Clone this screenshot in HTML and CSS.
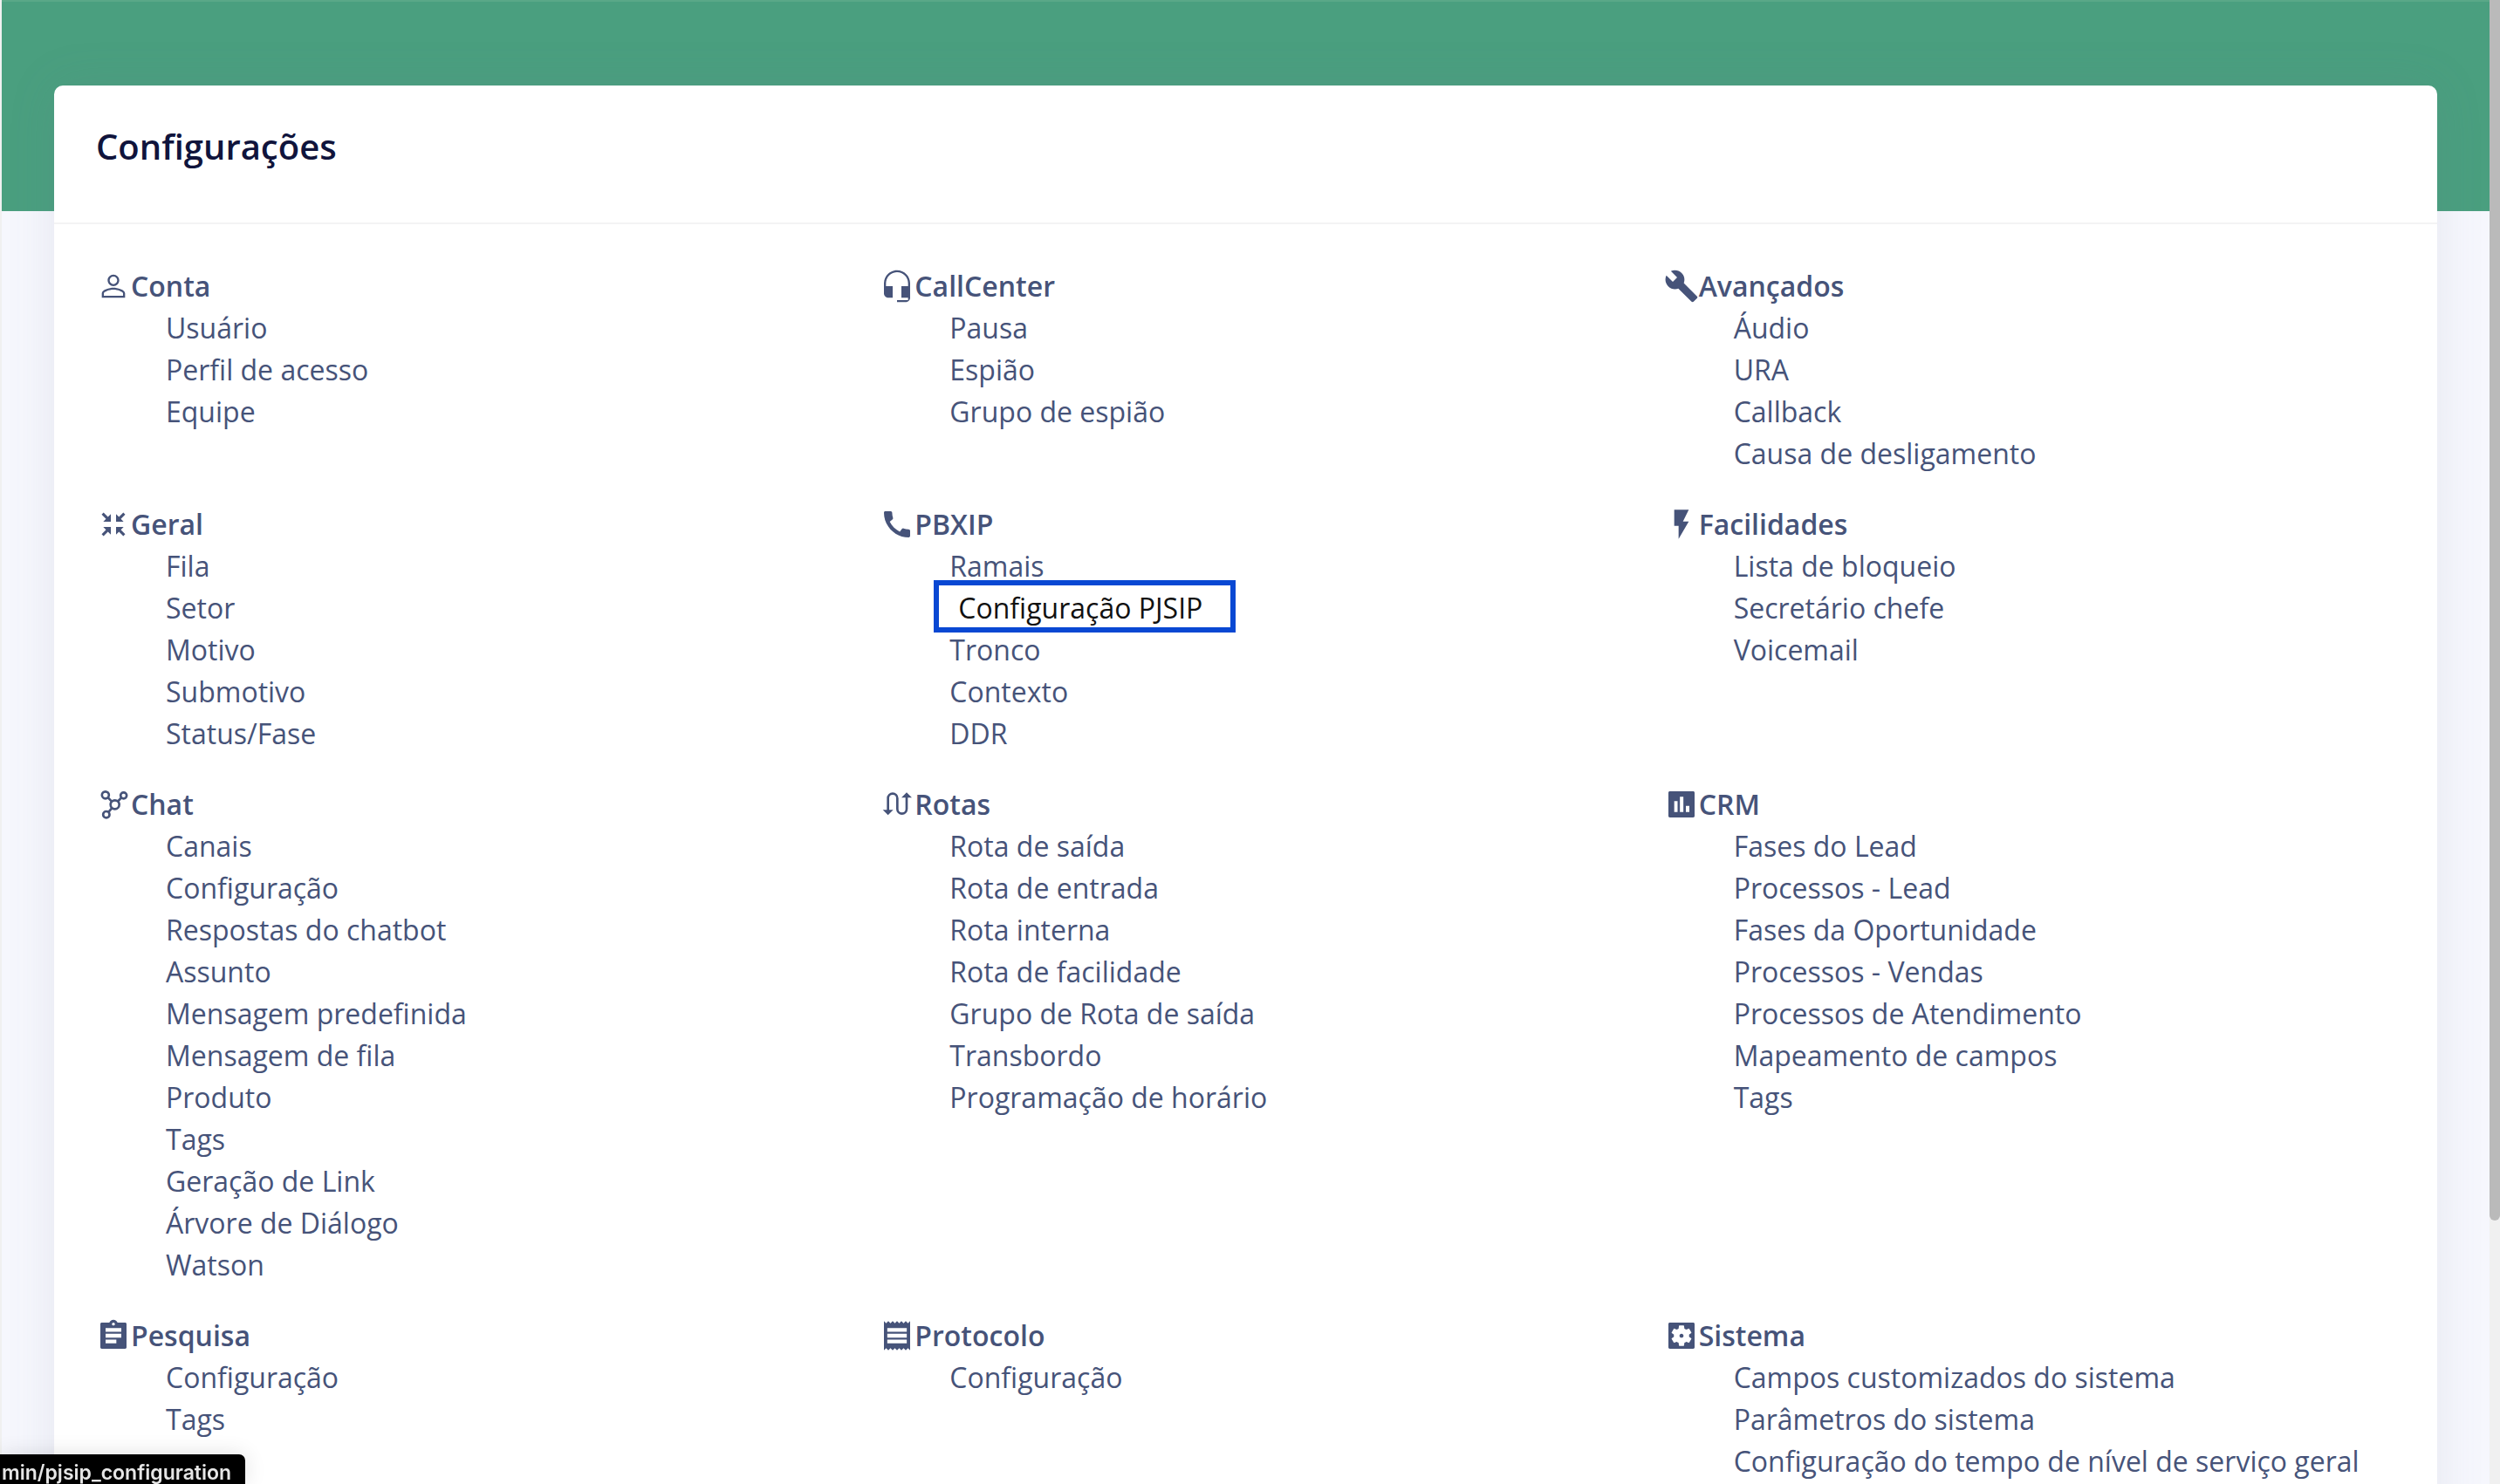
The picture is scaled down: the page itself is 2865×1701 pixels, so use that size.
FILE: index.html
```html
<!DOCTYPE html>
<html lang="pt-BR">
<head>
<meta charset="utf-8">
<meta name="viewport" content="width=device-width, initial-scale=1">
<title>Configurações</title>
<link rel="stylesheet" href="styles.css">
</head>
<body>
<div class="viewport">
  <main class="page">
    <section class="card">
      <header class="card-header"><h1 class="card-title">Configurações</h1></header>
      <div class="groups">
        <section class="group">
          <h2 class="group-title"><svg class="icon" viewBox="0 0 24 24" aria-hidden="true"><path d="M12 5.400c1.440 0 2.600 1.160 2.600 2.600s-1.160 2.600-2.600 2.600S9.400 9.440 9.400 8s1.160-2.600 2.600-2.600m0 9c2.970 0 6.600 1.460 6.600 2.600v1.600H5.400V17c0-1.140 3.630-2.600 6.600-2.600M12 4C9.790 4 8 5.790 8 8s1.790 4 4 4 4-1.790 4-4-1.790-4-4-4zm0 9c-2.670 0-8 1.340-8 4v3h16v-3c0-2.660-5.330-4-8-4z"/></svg>Conta</h2>
          <ul class="links">
            <li><a href="#">Usuário</a></li>
            <li><a href="#">Perfil de acesso</a></li>
            <li><a href="#">Equipe</a></li>
          </ul>
        </section>
        <section class="group">
          <h2 class="group-title"><svg class="icon" viewBox="0 0 24 24" aria-hidden="true"><path d="M12 1c-4.970 0-9 4.030-9 9v7c0 1.660 1.340 3 3 3h3v-8H4.400v-2c0-4.200 3.400-7.600 7.600-7.600s7.600 3.400 7.600 7.600v2H15v8h4.600v1.600H12V23h6c1.660 0 3-1.340 3-3V10c0-4.970-4.030-9-9-9z"/></svg>CallCenter</h2>
          <ul class="links">
            <li><a href="#">Pausa</a></li>
            <li><a href="#">Espião</a></li>
            <li><a href="#">Grupo de espião</a></li>
          </ul>
        </section>
        <section class="group">
          <h2 class="group-title"><svg class="icon" viewBox="0 0 24 24" aria-hidden="true"><path d="M22.700 19l-9.100-9.100c.9-2.300.4-5-1.500-6.900-2-2-5-2.400-7.400-1.300L9 6 6 9 1.600 4.700C.4 7.100.9 10.100 2.900 12.100c1.900 1.900 4.600 2.400 6.900 1.500l9.100 9.100c.4.4 1 .4 1.400 0l2.300-2.300c.5-.4.5-1.100.1-1.400z"/></svg>Avançados</h2>
          <ul class="links">
            <li><a href="#">Áudio</a></li>
            <li><a href="#">URA</a></li>
            <li><a href="#">Callback</a></li>
            <li><a href="#">Causa de desligamento</a></li>
          </ul>
        </section>

        <section class="group">
          <h2 class="group-title"><svg class="icon" viewBox="0 0 24 24" aria-hidden="true"><path d="M3.900 5.200 5.200 3.900 8.200 6.900 10.200 5v5.200H5L6.900 8.200zM20.100 5.200 18.800 3.900 15.800 6.900 13.800 5v5.200H19L17.100 8.200zM3.900 18.800 5.200 20.100 8.200 17.100 10.200 19v-5.200H5L6.900 15.800zM20.100 18.800 18.800 20.100 15.800 17.100 13.800 19v-5.200H19L17.100 15.800z"/></svg>Geral</h2>
          <ul class="links">
            <li><a href="#">Fila</a></li>
            <li><a href="#">Setor</a></li>
            <li><a href="#">Motivo</a></li>
            <li><a href="#">Submotivo</a></li>
            <li><a href="#">Status/Fase</a></li>
          </ul>
        </section>
        <section class="group">
          <h2 class="group-title"><svg class="icon" viewBox="0 0 24 24" aria-hidden="true"><path d="M20.010 15.380c-1.230 0-2.420-.2-3.530-.56-.35-.12-.74-.03-1.010.24l-1.570 1.970c-2.830-1.350-5.480-3.900-6.890-6.830l1.950-1.660c.27-.28.35-.67.24-1.020-.37-1.110-.56-2.300-.56-3.530 0-.54-.45-.99-.99-.99H4.190C3.650 3 3 3.240 3 3.990 3 13.280 10.730 21 20.010 21c.71 0 .99-.63.99-1.180v-3.450c0-.54-.45-.99-.99-.99z"/></svg>PBXIP</h2>
          <ul class="links">
            <li><a href="#">Ramais</a></li>
            <li><a class="highlighted" href="#">Configuração PJSIP</a></li>
            <li><a href="#">Tronco</a></li>
            <li><a href="#">Contexto</a></li>
            <li><a href="#">DDR</a></li>
          </ul>
        </section>
        <section class="group">
          <h2 class="group-title"><svg class="icon" viewBox="0 0 24 24" aria-hidden="true"><path d="M7 2v11h3v9l7-12h-4l4-8z"/></svg>Facilidades</h2>
          <ul class="links">
            <li><a href="#">Lista de bloqueio</a></li>
            <li><a href="#">Secretário chefe</a></li>
            <li><a href="#">Voicemail</a></li>
          </ul>
        </section>

        <section class="group">
          <h2 class="group-title"><svg class="icon icon-line" viewBox="0 0 24 24" aria-hidden="true"><circle cx="6.500" cy="5.600" r="2.400"/><circle cx="19" cy="5.900" r="2.100"/><circle cx="13" cy="12.200" r="3"/><circle cx="7.100" cy="19" r="2.200"/><path d="M8.200 7.300l2.600 2.700M17.400 7.400l-2.300 2.500M11 14.500l-2.400 2.800"/></svg>Chat</h2>
          <ul class="links">
            <li><a href="#">Canais</a></li>
            <li><a href="#">Configuração</a></li>
            <li><a href="#">Respostas do chatbot</a></li>
            <li><a href="#">Assunto</a></li>
            <li><a href="#">Mensagem predefinida</a></li>
            <li><a href="#">Mensagem de fila</a></li>
            <li><a href="#">Produto</a></li>
            <li><a href="#">Tags</a></li>
            <li><a href="#">Geração de Link</a></li>
            <li><a href="#">Árvore de Diálogo</a></li>
            <li><a href="#">Watson</a></li>
          </ul>
        </section>
        <section class="group">
          <h2 class="group-title"><svg class="icon icon-line" viewBox="0 0 24 24" aria-hidden="true"><path d="M5.800 17V7.800a3.200 3.200 0 0 1 6.400 0v7.400a3.200 3.200 0 0 0 6.400 0V6"/><path class="solid" d="M2.200 15.800h7.200l-3.600 3.600zM15 7.400h7.200L18.600 3.800z"/></svg>Rotas</h2>
          <ul class="links">
            <li><a href="#">Rota de saída</a></li>
            <li><a href="#">Rota de entrada</a></li>
            <li><a href="#">Rota interna</a></li>
            <li><a href="#">Rota de facilidade</a></li>
            <li><a href="#">Grupo de Rota de saída</a></li>
            <li><a href="#">Transbordo</a></li>
            <li><a href="#">Programação de horário</a></li>
          </ul>
        </section>
        <section class="group">
          <h2 class="group-title"><svg class="icon" viewBox="0 0 24 24" aria-hidden="true"><path d="M20 3H4c-.6 0-1 .4-1 1v16c0 .6.4 1 1 1h16c.6 0 1-.4 1-1V4c0-.6-.4-1-1-1zM9.300 17.300H7v-7.600h2.300v7.600zm4 0H10.900V6.800h2.400v10.500zm4.100 0h-2.400v-4.300h2.400v4.300z"/></svg>CRM</h2>
          <ul class="links">
            <li><a href="#">Fases do Lead</a></li>
            <li><a href="#">Processos - Lead</a></li>
            <li><a href="#">Fases da Oportunidade</a></li>
            <li><a href="#">Processos - Vendas</a></li>
            <li><a href="#">Processos de Atendimento</a></li>
            <li><a href="#">Mapeamento de campos</a></li>
            <li><a href="#">Tags</a></li>
          </ul>
        </section>

        <section class="group">
          <h2 class="group-title"><svg class="icon" viewBox="0 0 24 24" aria-hidden="true"><path fill-rule="evenodd" d="M20 3h-5.180C14.400 1.840 13.300 1 12 1s-2.400.84-2.820 2H4c-.6 0-1 .4-1 1v16c0 .6.4 1 1 1h16c.6 0 1-.4 1-1V4c0-.6-.4-1-1-1zm-8 0c.55 0 1 .45 1 1s-.45 1-1 1-1-.45-1-1 .45-1 1-1zm2 14.300H6.600v-2.600H14v2.600zm3.400-4H6.600v-2.600h10.800v2.600zm0-4H6.600V6.700h10.800v2.600z"/></svg>Pesquisa</h2>
          <ul class="links">
            <li><a href="#">Configuração</a></li>
            <li><a href="#">Tags</a></li>
          </ul>
        </section>
        <section class="group">
          <h2 class="group-title"><svg class="icon" viewBox="0 0 24 24" aria-hidden="true"><path d="M18.700 17.300H5.300v-2.600h13.400v2.600zm0-4H5.300v-2.600h13.400v2.600zm0-4H5.300V6.700h13.400v2.600zM3 22l1.500-1.500L6 22l1.500-1.500L9 22l1.500-1.500L12 22l1.500-1.500L15 22l1.500-1.500L18 22l1.500-1.500L21 22V2l-1.500 1.500L18 2l-1.500 1.500L15 2l-1.500 1.500L12 2l-1.500 1.500L9 2 7.500 3.500 6 2 4.500 3.500 3 2v20z"/></svg>Protocolo</h2>
          <ul class="links">
            <li><a href="#">Configuração</a></li>
          </ul>
        </section>
        <section class="group">
          <h2 class="group-title"><svg class="icon" viewBox="0 0 24 24" aria-hidden="true"><path d="M12 10.600c-.8 0-1.400.6-1.400 1.400s.6 1.400 1.400 1.400 1.400-.6 1.400-1.400-.6-1.400-1.400-1.400zM20 3H4c-.6 0-1 .4-1 1v16c0 .6.4 1 1 1h16c.6 0 1-.4 1-1V4c0-.6-.4-1-1-1zm-2.750 9c0 .23-.02.46-.05.68l1.480 1.160c.13.11.17.3.08.45l-1.400 2.420c-.09.15-.27.21-.43.15l-1.740-.7c-.36.28-.76.51-1.180.69l-.26 1.850c-.03.17-.18.3-.35.3h-2.800c-.17 0-.32-.13-.35-.29l-.26-1.850c-.43-.18-.82-.41-1.180-.69l-1.740.7c-.16.06-.34 0-.43-.15l-1.400-2.420c-.09-.15-.05-.34.08-.45l1.480-1.160c-.03-.23-.05-.46-.05-.69 0-.23.02-.46.05-.68l-1.480-1.160c-.13-.11-.17-.3-.08-.45l1.400-2.420c.09-.15.27-.21.43-.15l1.740.7c.36-.28.76-.51 1.180-.69l.26-1.850c.03-.17.18-.3.35-.3h2.800c.17 0 .32.13.35.29l.26 1.850c.43.18.82.41 1.180.69l1.740-.7c.16-.06.34 0 .43.15l1.400 2.420c.09.15.05.34-.08.45l-1.480 1.160c.03.23.05.46.05.69z"/></svg>Sistema</h2>
          <ul class="links">
            <li><a href="#">Campos customizados do sistema</a></li>
            <li><a href="#">Parâmetros do sistema</a></li>
            <li><a href="#">Configuração do tempo de nível de serviço geral</a></li>
          </ul>
        </section>
      </div>
    </section>
  </main>
  <div class="scroll-track" aria-hidden="true"><div class="scroll-thumb"></div></div>
</div>
<div class="status-url">min/pjsip_configuration</div>
</body>
</html>
```
FILE: styles.css
```css
* {
  box-sizing: border-box;
}

body {
  margin: 0;
  font-family: "Open Sans", "Noto Sans", sans-serif;
  font-size: 32px;
  line-height: 48px;
  color: #465379;
  background: #f0f0f0;
}

.viewport {
  display: flex;
  height: 100vh;
  overflow: hidden;
}

.page {
  flex: 1;
  margin-left: 2px;
  padding: 98px 60px 0;
  overflow: hidden;
  background: linear-gradient(#5aa888 2px, #4a9f7f 2px, #4a9f7f 242px, #f6f7fd 242px);
}

.card {
  background: #fff;
  border-radius: 10px;
  box-shadow: 0 0 56px rgba(110, 118, 140, 0.12);
}

.card-header {
  padding: 46px 48px 63px;
  border-bottom: 2px solid #f3f3f4;
}

.card-title {
  margin: 0;
  font-size: 40px;
  font-weight: 600;
  line-height: 48px;
  color: #10143c;
}

.groups {
  display: grid;
  grid-template-columns: repeat(3, minmax(0, 1fr));
  gap: 33px 60px;
  padding: 47px 48px 96px;
}

.group-title {
  display: flex;
  align-items: center;
  margin: 0;
  font-size: 32px;
  font-weight: 600;
  line-height: 48px;
}

.icon {
  flex: none;
  width: 40px;
  height: 40px;
  fill: currentColor;
}

.icon-line {
  fill: none;
  stroke: currentColor;
  stroke-width: 1.6;
}

.icon-line .solid {
  fill: currentColor;
  stroke: none;
}

.links {
  margin: 0;
  padding: 0 0 0 80px;
  list-style: none;
}

.links a {
  display: block;
  width: fit-content;
  color: inherit;
  text-decoration: none;
}

.links .highlighted {
  margin: -8px 0 -4px -18px;
  padding: 4px 32px 0 22px;
  border: 6px solid #0948d3;
  line-height: 44px;
  color: #111;
  background: #fff;
}

.scroll-track {
  flex: none;
  width: 12px;
  background: #f0f0f0;
}

.scroll-thumb {
  height: 82.25%;
  border-radius: 0 0 7px 7px;
  background: #bababa;
}

.status-url {
  position: fixed;
  bottom: 0;
  left: 0;
  padding: 8px 16px 0 2px;
  border-top-right-radius: 7px;
  font-family: Inter, "Liberation Sans", sans-serif;
  font-size: 23px;
  font-weight: 600;
  line-height: 26px;
  color: #e6e6e6;
  background: #000;
  box-shadow: 0 0 24px rgba(0, 0, 0, 0.12);
}
```
